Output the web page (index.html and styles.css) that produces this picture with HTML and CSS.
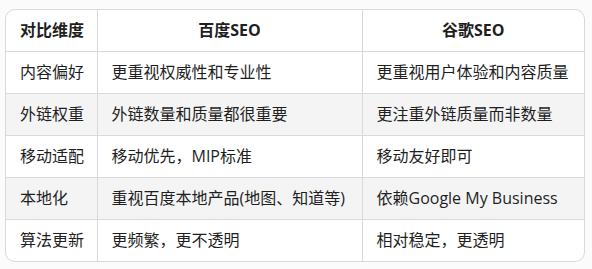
FILE: index.html
```html
<!DOCTYPE html>
<html lang="zh-CN">
<head>
<meta charset="utf-8">
<link rel="stylesheet" href="styles.css">
</head>
<body>
<div class="wrap">
  <table class="cmp">
    <colgroup>
      <col class="c1"><col class="c2"><col class="c3">
    </colgroup>
    <thead>
      <tr><th class="left">对比维度</th><th>百度SEO</th><th>谷歌SEO</th></tr>
    </thead>
    <tbody>
      <tr><td>内容偏好</td><td>更重视权威性和专业性</td><td>更重视用户体验和内容质量</td></tr>
      <tr class="alt"><td>外链权重</td><td>外链数量和质量都很重要</td><td>更注重外链质量而非数量</td></tr>
      <tr><td>移动适配</td><td>移动优先，MIP标准</td><td>移动友好即可</td></tr>
      <tr class="alt"><td>本地化</td><td>重视百度本地产品(地图、知道等)</td><td>依赖Google My Business</td></tr>
      <tr><td>算法更新</td><td>更频繁，更不透明</td><td>相对稳定，更透明</td></tr>
    </tbody>
  </table>
</div>
</body>
</html>
```

FILE: styles.css
```css
html, body {
  margin: 0;
  background: #fbfbfb;
}
body {
  padding: 9px 7px 0 5px;
  font-family: "Open Sans", "Noto Sans CJK SC", sans-serif;
  color: #1f1f1f;
  font-size: 16px;
}
.wrap {
  width: 578px;
  border: 1px solid #d5d9e0;
  border-radius: 10px;
  overflow: hidden;
  background: #fff;
}
.cmp {
  width: 100%;
  border-collapse: collapse;
  table-layout: fixed;
}
.c1 { width: 91px; }
.c2 { width: 265px; }
.c3 { width: auto; }
.cmp th, .cmp td {
  padding: 8px 14px;
  line-height: 25px;
  border-right: 1px solid #d5d9e0;
  border-bottom: 1px solid #d5d9e0;
  text-align: left;
  white-space: nowrap;
  font-family: "Open Sans", "Noto Sans CJK SC", sans-serif;
}
.cmp th {
  font-weight: 700;
  text-align: center;
}
.cmp th.left { text-align: left; }
.cmp tr > :last-child { border-right: none; }
.cmp tbody tr:last-child td { border-bottom: none; }
.cmp tr.alt td { background: #f4f4f5; }
```
